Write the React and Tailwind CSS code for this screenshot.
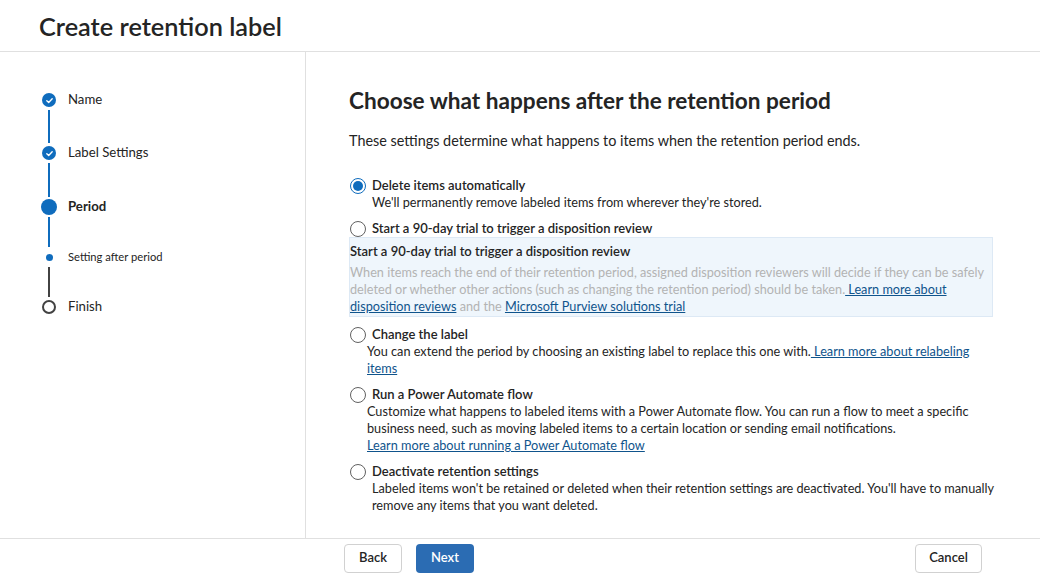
import React from 'react';

const steps = [
  { id: 1, name: 'Name', state: 'done', h: 'h-[53px]', line: 'bg-[#0f6cbd]' },
  { id: 2, name: 'Label Settings', state: 'done', h: 'h-[54px]', line: 'bg-[#0f6cbd]' },
  { id: 3, name: 'Period', state: 'current', h: 'h-[50px]', line: 'bg-[#0f6cbd]' },
  { id: 4, name: 'Setting after period', state: 'sub', h: 'h-[50px]', line: 'bg-[#424242]' },
  { id: 5, name: 'Finish', state: 'todo', h: 'h-[20px]', line: '' },
];

const StepIcon = ({ state }) => {
  if (state === 'done') {
    return (
      <span className="w-[14px] h-[14px] rounded-full bg-[#0f6cbd] flex items-center justify-center">
        <svg width="9" height="9" viewBox="0 0 10 10" fill="none">
          <path d="M2 5.2 4.1 7.2 8 3" stroke="white" strokeWidth="1.5" strokeLinecap="round" strokeLinejoin="round" />
        </svg>
      </span>
    );
  }
  if (state === 'current') return <span className="w-[16px] h-[16px] rounded-full bg-[#0f6cbd]" />;
  if (state === 'sub') return <span className="w-[7px] h-[7px] rounded-full bg-[#0f6cbd]" />;
  return <span className="w-[14px] h-[14px] rounded-full border-2 border-[#424242] bg-white" />;
};

const Stepper = () => (
  <ol className="pl-[39px] pt-[38px]">
    {steps.map((step, idx) => (
      <li key={step.id} className={`flex ${step.h}`}>
        <div className="w-[20px] flex flex-col items-center">
          <div className="h-[20px] flex items-center justify-center">
            <StepIcon state={step.state} />
          </div>
          {idx !== steps.length - 1 && <div className={`w-[2px] flex-1 ${step.line}`} />}
        </div>
        <div className="ml-[9px] h-[20px] flex items-center">
          <span
            className={`${step.state === 'sub' ? 'text-[11.2px]' : 'text-[13.2px]'} ${
              step.state === 'current' ? 'font-bold' : ''
            } text-[#242424]`}
          >
            {step.name}
          </span>
        </div>
      </li>
    ))}
  </ol>
);

const Radio = ({ checked }) => (
  <span
    className={`w-[16px] h-[16px] shrink-0 rounded-full border flex items-center justify-center bg-white ${
      checked ? 'border-[#0f6cbd]' : 'border-[#616161]'
    }`}
  >
    {checked && <span className="w-[10px] h-[10px] rounded-full bg-[#0f6cbd]" />}
  </span>
);

const Link = ({ children }) => <a className="text-[#0f548c] underline cursor-pointer">{children}</a>;

const Option = ({ checked, label, children, descPad = 'pl-[23px]', descExtra = '' }) => (
  <div>
    <label className="flex items-center h-[17px] pl-px">
      <Radio checked={checked} />
      <span className="ml-[6px] text-[13px] font-semibold text-[#242424]">{label}</span>
    </label>
    {children && <p className={`${descPad} ${descExtra} text-[12.7px] leading-[17px] text-[#242424]`}>{children}</p>}
  </div>
);

export default function App() {
  return (
    <div className="h-[577px] w-[1040px] flex flex-col bg-white text-[#242424] overflow-hidden" style={{ fontFamily: '"Segoe UI", Lato, "Noto Sans", sans-serif' }}>
      <header className="h-[52px] shrink-0 border-b border-[#e0e0e0] flex items-center pl-[39px]">
        <h1 className="text-[25.3px] font-semibold mt-[2px]">Create retention label</h1>
      </header>

      <div className="flex flex-1 min-h-0">
        <aside className="w-[306px] shrink-0 border-r border-[#e0e0e0]">
          <Stepper />
        </aside>

        <main className="flex-1 pl-[43px] pr-[47px] pt-[35px]">
          <h2 className="text-[22.6px] font-bold leading-[28px]">Choose what happens after the retention period</h2>
          <p className="mt-[16px] text-[14.4px] leading-[20px]">
            These settings determine what happens to items when the retention period ends.
          </p>

          <div className="mt-[26px] flex flex-col">
            <Option checked label="Delete items automatically">
              We'll permanently remove labeled items from wherever they're stored.
            </Option>

            <div className="mt-[9px]">
              <Option label="Start a 90-day trial to trigger a disposition review" />
              <div className="border border-[#dde9f5] bg-[#eff6fc] pt-[3px] pb-px">
                <p className="text-[13px] font-semibold leading-[20px] text-[#242424]">
                  Start a 90-day trial to trigger a disposition review
                </p>
                <p className="mt-[3px] text-[12.7px] leading-[17px] text-[#b3b3b3]">
                  When items reach the end of their retention period, assigned disposition reviewers will decide if they can be safely deleted or whether other actions (such as changing the retention period) should be taken.
                  <Link> Learn more about disposition reviews</Link> and the <Link>Microsoft Purview solutions trial</Link>
                </p>
              </div>
            </div>

            <div className="mt-[9px]">
              <Option label="Change the label" descPad="pl-[18px]">
                You can extend the period by choosing an existing label to replace this one with.
                <Link> Learn more about relabeling items</Link>
              </Option>
            </div>

            <div className="mt-[9px]">
              <Option label="Run a Power Automate flow" descPad="pl-[18px]">
                Customize what happens to labeled items with a Power Automate flow. You can run a flow to meet a specific business need, such as moving labeled items to a certain location or sending email notifications.
                <br />
                <Link>Learn more about running a Power Automate flow</Link>
              </Option>
            </div>

            <div className="mt-[9px]">
              <Option label="Deactivate retention settings" descExtra="mr-[-8px]">
                Labeled items won't be retained or deleted when their retention settings are deactivated. You'll have to manually remove any items that you want deleted.
              </Option>
            </div>
          </div>
        </main>
      </div>

      <footer className="h-[39px] shrink-0 border-t border-[#e0e0e0] flex items-center pl-[344px] pr-[58px]">
        <button className="h-[29px] w-[58px] rounded-[4px] border border-[#d1d1d1] bg-white text-[13px] font-semibold text-[#242424]">
          Back
        </button>
        <button className="ml-[14px] h-[29px] w-[58px] rounded-[4px] bg-[#2b6cb3] text-[13px] font-semibold text-white">
          Next
        </button>
        <button className="ml-auto h-[29px] w-[67px] rounded-[4px] border border-[#d1d1d1] bg-white text-[13px] font-semibold text-[#242424]">
          Cancel
        </button>
      </footer>
    </div>
  );
}
